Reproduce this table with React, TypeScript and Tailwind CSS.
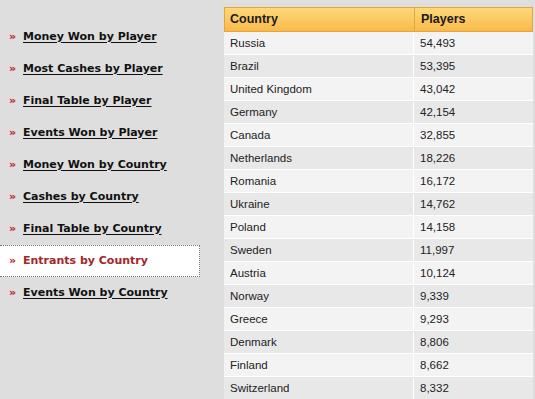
import React from 'react';

const links = [
  'Money Won by Player',
  'Most Cashes by Player',
  'Final Table by Player',
  'Events Won by Player',
  'Money Won by Country',
  'Cashes by Country',
  'Final Table by Country',
  'Entrants by Country',
  'Events Won by Country',
];

const rows: [string, string][] = [
  ['Russia', '54,493'],
  ['Brazil', '53,395'],
  ['United Kingdom', '43,042'],
  ['Germany', '42,154'],
  ['Canada', '32,855'],
  ['Netherlands', '18,226'],
  ['Romania', '16,172'],
  ['Ukraine', '14,762'],
  ['Poland', '14,158'],
  ['Sweden', '11,997'],
  ['Austria', '10,124'],
  ['Norway', '9,339'],
  ['Greece', '9,293'],
  ['Denmark', '8,806'],
  ['Finland', '8,662'],
  ['Switzerland', '8,332'],
];

const App: React.FC = () => {
  const active = 'Entrants by Country';

  return (
    <div className="w-[535px] h-[399px] overflow-hidden bg-[#dedede] flex" style={{ fontFamily: '"DejaVu Sans", Verdana, sans-serif' }}>
      {/* Side menu */}
      <div className="w-[224px] shrink-0 pt-[21px]">
        {links.map(label => {
          const isActive = label === active;
          return (
            <div
              key={label}
              className={`w-[200px] h-[32px] flex items-center pl-[9px] ${
                isActive ? 'bg-white border-y border-r border-dotted border-[#777]' : ''
              }`}
            >
              <span className="text-[#c0141b] text-[11px] font-bold w-[14px]">»</span>
              <span
                className={`text-[11px] font-bold ${
                  isActive ? 'text-[#a3262a]' : 'text-[#111] underline underline-offset-2'
                }`}
              >
                {label}
              </span>
            </div>
          );
        })}
      </div>

      {/* Table */}
      <div className="w-[309px] mt-[7px]" style={{ fontFamily: '"Liberation Sans", Arial, sans-serif' }}>
        <div className="flex h-[25px] bg-gradient-to-b from-[#fdd978] to-[#f9b94a] border border-[#e3a53c] text-[12.5px] font-bold text-[#1a1a1a]">
          <div className="w-[190px] flex items-center pl-[5px] border-r border-[#e3a53c]">Country</div>
          <div className="flex-1 flex items-center pl-[6px]">Players</div>
        </div>
        {rows.map(([country, players], i) => (
          <div
            key={country}
            className={`flex h-[23px] pt-px border-b border-white text-[11.5px] text-[#222] ${
              i % 2 === 0 ? 'bg-[#f4f3f4]' : 'bg-[#e9e8e9]'
            }`}
          >
            <div className="w-[190px] flex items-center pl-[6px] border-r border-white">{country}</div>
            <div className="flex-1 flex items-center pl-[6px]">{players}</div>
          </div>
        ))}
      </div>
    </div>
  );
};

export default App;
